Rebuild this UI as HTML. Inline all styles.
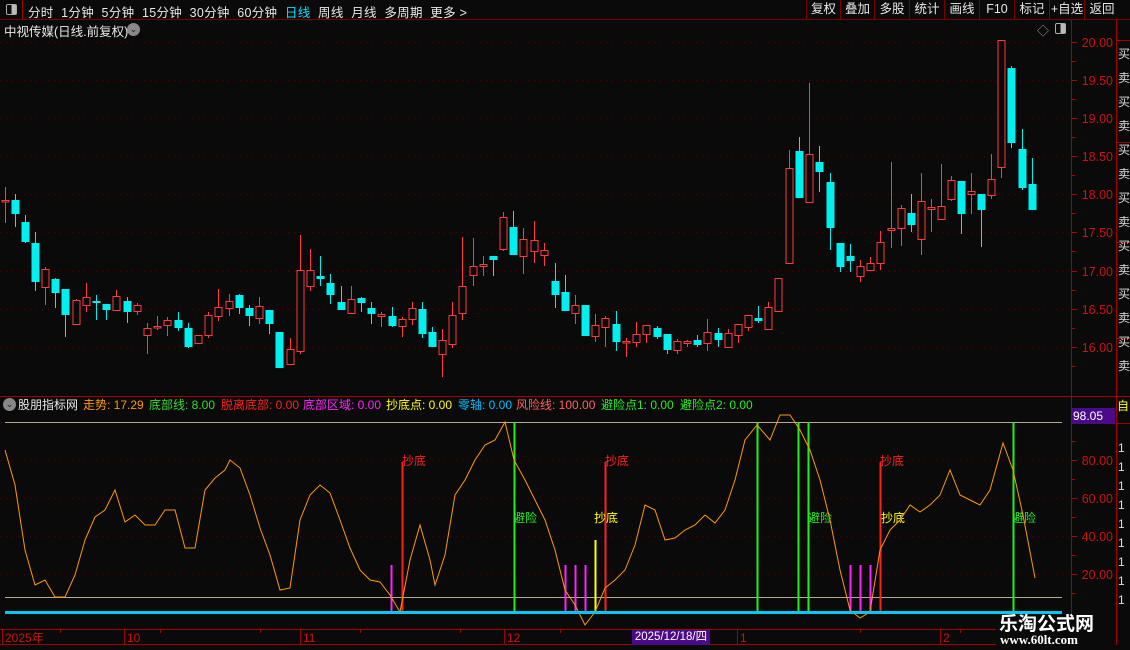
<!DOCTYPE html>
<html><head><meta charset="utf-8"><style>
*{margin:0;padding:0;box-sizing:border-box}
body{width:1130px;height:650px;background:#0a0a0a;overflow:hidden;position:relative;font-family:"Liberation Sans","Noto Sans CJK SC",sans-serif;color:#ddd;font-size:12px}
.a{position:absolute;white-space:nowrap}
#tb{position:absolute;left:0;top:0;width:1130px;height:20px;border-bottom:1px solid #7a0000}
.btn{position:absolute;top:0;height:19px;border-left:1px solid #7a0000;color:#e8e8e8;font-size:12.5px;line-height:19px;text-align:center}
</style></head><body>
<div id="tb">
<div class="a" style="left:0;top:0;width:23px;height:19px;border-right:1px solid #a00000"></div>
<div class="a" style="left:6px;top:4px;width:11px;height:11px;border:1px solid #aaa;border-radius:2px;background:linear-gradient(90deg,#0a0a0a 50%,#bbb 50%)"></div>
<div class="a" style="left:28px;top:2px;font-size:12.5px;color:#e8e8e8;letter-spacing:0.3px">分时&nbsp; 1分钟&nbsp; 5分钟&nbsp; 15分钟&nbsp; 30分钟&nbsp; 60分钟&nbsp; <span style="color:#00e5ff">日线</span>&nbsp; 周线&nbsp; 月线&nbsp; 多周期&nbsp; 更多 &gt;</div>
<div class="btn" style="left:806px;width:34px">复权</div>
<div class="btn" style="left:840px;width:34px">叠加</div>
<div class="btn" style="left:874px;width:35px">多股</div>
<div class="btn" style="left:909px;width:35px">统计</div>
<div class="btn" style="left:944px;width:35px">画线</div>
<div class="btn" style="left:979px;width:35px">F10</div>
<div class="btn" style="left:1014px;width:35px">标记</div>
<div class="btn" style="left:1049px;width:35px">+自选</div>
<div class="btn" style="left:1084px;width:35px">返回</div>
</div>
<div class="a" style="left:4px;top:21px;font-size:12.5px;color:#e8e8e8">中视传媒(日线.前复权)</div>
<div class="a" style="left:127px;top:23px;width:13px;height:13px;border-radius:50%;background:#888;color:#222;font-size:9px;line-height:13px;text-align:center">⌄</div>
<div class="a" style="left:1037px;top:22px;color:#999;font-size:12px">◇</div>
<div class="a" style="left:1055px;top:23px;width:11px;height:11px;border:1px solid #aaa;border-radius:2px;background:linear-gradient(90deg,#0a0a0a 50%,#bbb 50%)"></div>

<svg class="a" style="left:0;top:0" width="1130" height="650" id="sv"></svg>

<div class="a" style="left:3px;top:398px;width:13px;height:13px;border-radius:50%;background:#888;color:#222;font-size:9px;line-height:13px;text-align:center">⌄</div>
<div class="a" style="top:397px;left:18px;font-size:12px;line-height:16px">
<span style="color:#e8e8e8">股朋指标网</span></div>
<div class="a" style="top:397px;left:83px;color:#ff9900;line-height:16px">走势: 17.29</div>
<div class="a" style="top:397px;left:149px;color:#33dd33;line-height:16px">底部线: 8.00</div>
<div class="a" style="top:397px;left:221px;color:#ff2020;line-height:16px">脱离底部: 0.00</div>
<div class="a" style="top:397px;left:303px;color:#ff22ff;line-height:16px">底部区域: 0.00</div>
<div class="a" style="top:397px;left:386px;color:#ffff00;line-height:16px">抄底点: 0.00</div>
<div class="a" style="top:397px;left:458px;color:#00bfff;line-height:16px">零轴: 0.00</div>
<div class="a" style="top:397px;left:516px;color:#ff6060;line-height:16px">风险线: 100.00</div>
<div class="a" style="top:397px;left:601px;color:#22ee22;line-height:16px">避险点1: 0.00</div>
<div class="a" style="top:397px;left:680px;color:#22ee22;line-height:16px">避险点2: 0.00</div>

<div class="a" style="left:1072px;top:408px;width:43px;height:16px;background:#4b0a8a;color:#fff;font-size:12px;line-height:16px;padding-left:1px">98.05</div>
<div class="a" style="left:1117px;top:397px;color:#ffff00;font-size:12px">自</div>

<div class="a" style="left:632px;top:630px;width:78px;height:15px;background:#4b0a8a;color:#fff;font-size:11.5px;line-height:15px;text-align:center">2025/12/18/四</div>
<div class="a" style="left:996px;top:615px;width:120px;height:35px;background:#0a0a0a"></div>
<div class="a" style="left:999px;top:609px;color:#fff;font-size:19px;font-weight:bold;font-family:'Noto Sans CJK SC',sans-serif">乐淘公式网</div>
<div class="a" style="left:1000px;top:632px;color:#fff;font-size:13px;font-weight:bold;font-family:'Liberation Serif',serif">www.60lt.com</div>

<script>
var s='';
function L(x1,y1,x2,y2,c,w,d){s+='<line x1="'+x1+'" y1="'+y1+'" x2="'+x2+'" y2="'+y2+'" stroke="'+c+'" stroke-width="'+(w||1)+'"'+(d?' stroke-dasharray="'+d+'"':'')+'/>';}
function T(x,y,t,c,fs,a){s+='<text x="'+x+'" y="'+y+'" fill="'+c+'" font-size="'+(fs||12)+'" font-family="Liberation Sans,Noto Sans CJK SC,sans-serif"'+(a?' text-anchor="'+a+'"':'')+'>'+t+'</text>';}
var pl=[[42,'20.00'],[80,'19.50'],[118,'19.00'],[156,'18.50'],[194,'18.00'],[232,'17.50'],[271,'17.00'],[309,'16.50'],[347,'16.00']];
pl.forEach(function(p){L(0,p[0]+.5,1070,p[0]+.5,'#5a0000',1,'1 5');L(1071,p[0]+.5,1077,p[0]+.5,'#b00000');T(1113,p[0]+5,p[1],'#d01010',12.5,'end');});
[61,99,137,175,213,251,290,328,366].forEach(function(y){L(1071,y+.5,1075,y+.5,'#b00000');});
[[460,'80.00'],[498,'60.00'],[536,'40.00'],[574,'20.00']].forEach(function(p){L(0,p[0]+.5,1070,p[0]+.5,'#5a0000',1,'1 5');L(1071,p[0]+.5,1077,p[0]+.5,'#b00000');T(1113,p[0]+5,p[1],'#d01010',12.5,'end');});
[441,479,517,555,593].forEach(function(y){L(1071,y+.5,1075,y+.5,'#b00000');});
L(1071.5,20,1071.5,645,'#a00000');L(1116.5,20,1116.5,645,'#a00000');
L(0,396.5,1130,396.5,'#a00000');L(0,629.5,1116,629.5,'#a00000');L(0,644.5,1116,644.5,'#a00000');
L(1116,40.5,1130,40.5,'#a00000');L(1116,142.5,1130,142.5,'#a00000');L(1116,242.5,1130,242.5,'#a00000');L(1116,338.5,1130,338.5,'#a00000');L(1116,423.5,1130,423.5,'#a00000');
var rc='买卖买卖买卖买卖买卖买卖买卖卖买卖';for(var i=0;i<14;i++)T(1118,58+i*24,rc[i],'#ddd',12);
for(var i=0;i<9;i++)T(1118,452+i*19,'1','#ddd',12);
var C=[[4.5,200,201,187,223,1],[15,200,214,194,227,0],[25,222,242,215,243,0],[35,243,282,232,291,0],[45,269,287,267,305,1],[55,279,293,278,308,0],[65,289,315,289,337,0],[76,300,324,299,324,1],[86,297,305,283,312,1],[96,301,303,295,320,0],[106,304,310,304,320,0],[116,296,310,290,310,1],[127,301,312,297,323,0],[137,305,311,303,315,1],[147,328,335,323,354,1],[157,326,327,316,330,1],[167,320,325,317,336,1],[178,320,328,312,331,0],[188,328,347,323,348,0],[198,335,343,335,343,1],[208,315,335,312,338,1],[218,307,316,289,321,1],[229,301,308,294,316,1],[239,295,308,294,314,0],[249,308,316,305,326,0],[259,306,318,297,324,1],[269,310,324,310,334,0],[279,332,368,332,368,0],
[290,349,364,338,364,1],[300,270,351,235,354,1],[310,270,286,249,291,1],[320,276,279,256,286,0],[330,283,295,274,304,0],[341,302,310,286,310,0],[351,299,313,286,313,1],[361,298,303,297,312,0],[371,308,314,302,324,0],[381,314,316,312,327,1],[392,316,326,307,327,0],[402,319,326,317,337,1],[412,308,319,302,325,1],[422,309,334,302,338,0],[432,332,347,327,347,0],[442,340,354,329,377,1],[452,315,344,302,348,1],[462,286,313,237,320,1],[473,266,275,238,286,1],[483,264,266,256,276,1],[493,256,260,256,276,0],[503,217,249,212,251,1],[513,227,255,211,255,0],[523,239,256,228,274,1],[534,240,251,221,263,1],[544,250,255,243,266,1],
[555,281,295,263,308,0],[565,292,311,275,311,0],[575,305,313,295,324,1],[585,305,336,305,336,0],[595,325,336,314,342,1],[605,318,327,316,347,1],[616,324,342,311,351,0],[626,341,342,338,357,1],[636,334,342,322,347,1],[646,325,334,325,343,1],[657,328,337,326,339,0],[667,334,350,334,354,0],[677,341,350,339,354,1],[687,341,343,340,347,1],[697,340,345,335,347,0],[707,332,343,319,351,1],[718,333,340,328,347,0],[728,333,347,329,347,1],[738,324,335,324,343,1],[748,315,327,315,331,1],[758,318,321,306,323,0],[768,307,329,302,330,1],[778,278,311,278,311,1],
[789,168,263,150,263,1],[799,151,198,137,198,0],[809,154,202,83,202,1],[819,162,172,146,192,0],[830,182,228,173,250,0],[840,243,267,243,272,0],[850,256,261,244,272,0],[860,266,276,260,282,1],[870,263,270,257,271,1],[880,242,263,231,270,1],[891,228,230,162,248,1],[901,208,228,205,246,1],[911,213,225,194,232,0],[921,201,239,173,255,1],[931,207,209,199,232,1],[941,206,219,164,219,1],[951,180,199,176,201,1],[961,181,214,181,234,0],[971,191,194,173,214,1],[981,194,210,194,247,0],[991,179,195,154,199,1],[1001,40,167,40,178,1],[1011,68,143,66,148,0],[1022,149,188,129,190,0],[1032,184,210,158,210,0]];
C.forEach(function(c){var x=Math.round(c[0]),col=c[5]?'#ff3b3b':'#00f0f0';
L(x+.5,c[3],x+.5,c[4],col);
var h=Math.max(c[2]-c[1],1.5);
if(c[5])s+='<rect x="'+(x-3)+'" y="'+(c[1]+.5)+'" width="7" height="'+h+'" fill="#0a0a0a" stroke="'+col+'" stroke-width="1"/>';
else s+='<rect x="'+(x-3.5)+'" y="'+c[1]+'" width="8" height="'+h+'" fill="'+col+'"/>';});
L(5,422.5,1062,422.5,'#b8a890');L(5,597.5,1062,597.5,'#b8a890');
[391,565,575,585,850,860,870].forEach(function(x){L(x+.5,565,x+.5,612,'#ff22ff',2);});
[595,880].forEach(function(x){L(x+.5,540,x+.5,612,'#ffff00',2);});
[402,605,880].forEach(function(x){L(x+.5,462,x+.5,612,'#ff2020',2);});
[514,757,798,808,1013].forEach(function(x){L(x+.5,422,x+.5,612,'#22ee22',2);});
T(414,465,'抄底','#ff2020',12,'middle');T(617,465,'抄底','#ff2020',12,'middle');T(892,465,'抄底','#ff2020',12,'middle');
T(525,522,'避险','#22ee22',12,'middle');T(820,522,'避险','#22ee22',12,'middle');T(1024,522,'避险','#22ee22',12,'middle');
T(606,522,'抄底','#ffff00',12,'middle');T(893,522,'抄底','#ffff00',12,'middle');
var P='5,450 15,485 25,550 35,585 45,580 55,597 65,597 75,575 85,540 95,517 105,510 115,490 125,522 135,515 145,525 155,525 165,510 175,510 185,548 195,548 205,490 215,478 225,470 230,460 240,468 250,495 260,528 270,555 280,590 290,588 300,520 310,495 320,485 330,493 340,520 350,548 360,570 370,580 380,582 390,595 400,612 410,560 420,525 430,560 435,585 445,555 455,495 465,480 475,460 485,445 495,440 505,422 514,460 525,480 535,500 545,520 555,550 565,590 575,605 585,625 595,612 605,588 615,580 625,570 635,545 645,505 655,510 665,540 675,538 685,530 695,525 705,515 715,523 725,510 735,480 745,440 757,425 770,440 780,415 790,415 800,430 810,450 820,480 830,520 840,570 850,610 860,618 870,612 880,550 890,530 900,520 910,505 920,512 930,505 940,495 950,470 960,495 970,500 980,505 990,490 1003,443 1013,470 1023,515 1035,578';
s+='<polyline points="'+P+'" fill="none" stroke="#ff9900" stroke-width="1"/>';
L(5,612.5,1062,612.5,'#00c8f0',3);
[[5,'2025年'],[127,'10'],[303,'11'],[507,'12'],[740,'1'],[943,'2']].forEach(function(d){L(d[0]-2.5,630,d[0]-2.5,644,'#a00000');T(d[0],642,d[1],'#d01010',12);});
[60,160,260,360,460,560,660,860,960].forEach(function(x){L(x+.5,630,x+.5,633,'#a00000');});
document.getElementById('sv').innerHTML=s;
</script>
</body></html>
